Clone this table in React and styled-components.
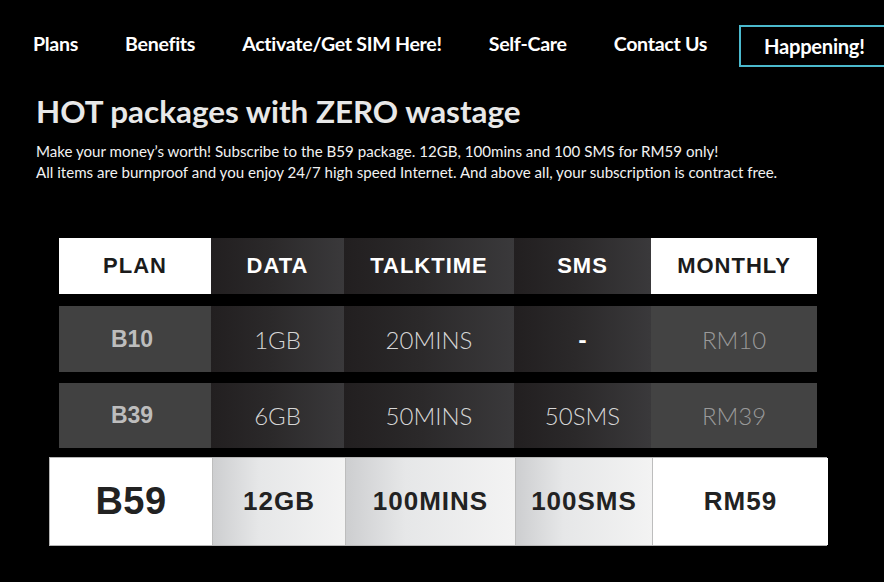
import React from 'react'
import styled, { createGlobalStyle, css } from 'styled-components'

const GlobalStyle = createGlobalStyle`
  html, body {
    margin: 0;
    padding: 0;
    background: #000;
    overflow: hidden;
  }
  body {
    font-family: "Lato", "Noto Sans", sans-serif;
    color: #fff;
  }
`

const navLinks = ['Plans', 'Benefits', 'Activate/Get SIM Here!', 'Self-Care', 'Contact Us']

const plans = [
  { plan: 'B10', data: '1GB', talk: '20MINS', sms: '-', monthly: 'RM10' },
  { plan: 'B39', data: '6GB', talk: '50MINS', sms: '50SMS', monthly: 'RM39' },
]

const darkGrad = 'linear-gradient(90deg, #221f20 0%, #2b292a 45%, #3a393b 100%)'
const lightGrad = 'linear-gradient(90deg, #cdced0 0%, #e6e7e8 35%, #f3f3f3 100%)'

export default function App() {
  return (
    <Page>
      <GlobalStyle />
      <Nav>
        {navLinks.map((label) => (
          <NavItem key={label}>{label}</NavItem>
        ))}
        <HighlightItem>Happening!</HighlightItem>
      </Nav>

      <Intro>
        <Title>HOT packages with ZERO wastage</Title>
        <Text>
          Make your money’s worth! Subscribe to the B59 package. 12GB, 100mins and 100 SMS for RM59 only!
          <br />
          All items are burnproof and you enjoy 24/7 high speed Internet. And above all, your subscription is contract free.
        </Text>
      </Intro>

      <Table>
        <HeadRow>
          <HeadCell $light>PLAN</HeadCell>
          <HeadCell>DATA</HeadCell>
          <HeadCell>TALKTIME</HeadCell>
          <HeadCell>SMS</HeadCell>
          <HeadCell $light>MONTHLY</HeadCell>
        </HeadRow>

        {plans.map((p) => (
          <PlanRow key={p.plan}>
            <PlanName>{p.plan}</PlanName>
            <ValueCell>{p.data}</ValueCell>
            <ValueCell>{p.talk}</ValueCell>
            <ValueCell $bold={p.sms === '-'}>{p.sms}</ValueCell>
            <PriceCell>{p.monthly}</PriceCell>
          </PlanRow>
        ))}

        <FeaturedRow>
          <FeaturedCell $big>B59</FeaturedCell>
          <FeaturedCell $grad>12GB</FeaturedCell>
          <FeaturedCell $grad>100MINS</FeaturedCell>
          <FeaturedCell $grad>100SMS</FeaturedCell>
          <FeaturedCell>RM59</FeaturedCell>
        </FeaturedRow>
      </Table>
    </Page>
  )
}

const Page = styled.div`
  width: 884px;
  height: 582px;
  overflow: hidden;
  background: #000;
`

const Nav = styled.nav`
  display: flex;
  align-items: center;
  gap: 47px;
  padding: 25px 0 0 33px;
  height: 42px;
  white-space: nowrap;
`

const NavItem = styled.a`
  flex-shrink: 0;
  font-family: "Lato", sans-serif;
  font-weight: 700;
  font-size: 19.6px;
  color: #fff;
  letter-spacing: -0.3px;
  padding-bottom: 5px;
`

/* the box runs past the right edge of the window in the screenshot */
const HighlightItem = styled(NavItem)`
  flex: 1 0 auto;
  margin-left: -15px;
  height: 42px;
  box-sizing: border-box;
  display: flex;
  align-items: center;
  padding: 0 0 0 23px;
  border: 2px solid #4bb9cd;
  border-right: none;
  font-size: 20.2px;
`

const Intro = styled.div`
  padding: 24px 0 0 36px;
`

const Title = styled.h1`
  margin: 0;
  font-family: "Lato", sans-serif;
  font-weight: 700;
  font-size: 31.4px;
  line-height: 40px;
  color: #e8e8e8;
`

const Text = styled.p`
  margin: 10px 0 0;
  font-family: "Lato", sans-serif;
  font-size: 15.1px;
  line-height: 21px;
  color: #f2f2f2;
`

const Table = styled.div`
  margin: 55px 0 0 59px;
  width: 758px;
  display: flex;
  flex-direction: column;
  font-family: "Liberation Sans", Arial, sans-serif;
`

const cols = css`
  display: grid;
  grid-template-columns: 152px 133px 170px 137px 166px;
`

const HeadRow = styled.div`
  ${cols};
  height: 56px;
`

const HeadCell = styled.div`
  display: flex;
  align-items: center;
  justify-content: center;
  font-weight: 700;
  font-size: 22px;
  letter-spacing: 1px;
  color: ${(p) => (p.$light ? '#1b1b1b' : '#fff')};
  background: ${(p) => (p.$light ? '#fff' : darkGrad)};
`

const PlanRow = styled.div`
  ${cols};
  height: 66px;
  margin-top: 12px;

  & + & {
    margin-top: 11px;
    height: 65px;
  }
`

const PlanName = styled.div`
  display: flex;
  align-items: center;
  justify-content: center;
  background: #414141;
  color: #bdbdbd;
  font-weight: 700;
  font-size: 23px;
  padding-right: 6px;
`

const ValueCell = styled.div`
  display: flex;
  align-items: center;
  justify-content: center;
  background: ${darkGrad};
  color: ${(p) => (p.$bold ? '#fff' : '#d6d6d6')};
  font-family: "Lato", sans-serif;
  font-weight: ${(p) => (p.$bold ? 900 : 300)};
  font-size: 24px;
`

const PriceCell = styled(ValueCell)`
  background: #434343;
  color: #9a9a9a;
`

const FeaturedRow = styled.div`
  display: grid;
  grid-template-columns: 162px 133px 170px 137px 176px;
  margin: 9px -10px 0;
  height: 89px;
  box-sizing: border-box;
  border: 1px solid #b5b5b5;
  background: #fff;
`

const FeaturedCell = styled.div`
  display: flex;
  align-items: center;
  justify-content: center;
  background: ${(p) => (p.$grad ? lightGrad : '#fff')};
  border-left: ${(p) => (p.$big ? 'none' : '1px solid #bdbdbd')};
  color: #222;
  font-weight: 700;
  font-size: ${(p) => (p.$big ? '38px' : '26px')};
  letter-spacing: ${(p) => (p.$big ? '0.5px' : '1px')};
`
